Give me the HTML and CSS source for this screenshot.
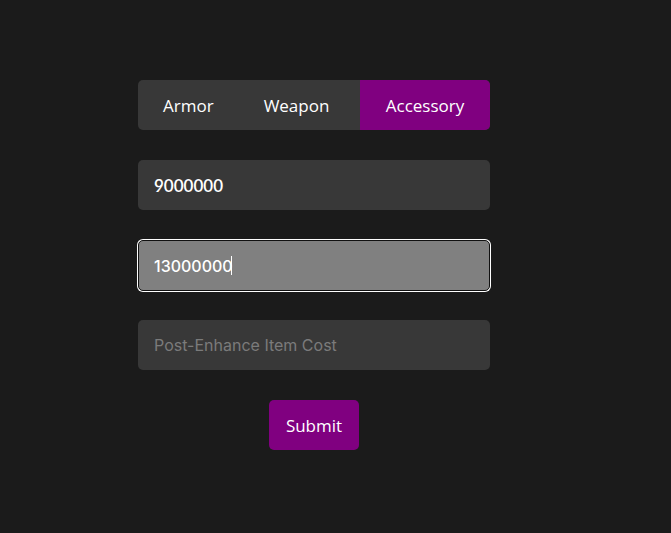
FILE: index.html
```html
<!DOCTYPE html>
<html lang="en">
<head>
<meta charset="utf-8">
<title>Enhance Calculator</title>
<link rel="stylesheet" href="styles.css">
</head>
<body>
<main class="panel">
  <div class="tabs">
    <button class="tab">Armor</button>
    <button class="tab">Weapon</button>
    <button class="tab tab-active">Accessory</button>
  </div>
  <input class="field" type="text" value="9000000">
  <div class="field-wrap">
    <input class="field field-focus" type="text" value="13000000">
    <span class="caret"></span>
  </div>
  <input class="field field-rubik" type="text" placeholder="Post-Enhance Item Cost">
  <button class="submit">Submit</button>
</main>
</body>
</html>
```
FILE: styles.css
```css
html, body {
  margin: 0;
  padding: 0;
  background: #1b1b1b;
  height: 100%;
}
body {
  font-family: "Open Sans", "Liberation Sans", sans-serif;
}
.panel {
  width: 352px;
  margin: 0 0 0 138px;
  padding-top: 80px;
  display: flex;
  flex-direction: column;
  align-items: stretch;
  gap: 30px;
}
.tabs {
  display: flex;
  height: 50px;
  background: #383838;
  border-radius: 5px;
  overflow: hidden;
}
.tab {
  border: none;
  background: transparent;
  color: #fff;
  font-family: "Open Sans", sans-serif;
  font-size: 17px;
  padding: 0 25px;
  height: 50px;
  cursor: pointer;
}
.tab-active {
  background: #800080;
  margin-left: auto;
  width: 130px;
}
.field {
  box-sizing: border-box;
  width: 352px;
  height: 50px;
  background: #383838;
  border: none;
  border-radius: 5px;
  padding: 0 16px;
  color: #fff;
  font-family: Lato, sans-serif;
  font-weight: 600;
  font-size: 17px;
  outline: none;
}
.field-rubik {
  font-family: Inter, sans-serif;
  font-weight: 400;
  font-size: 16px;
}
.field::placeholder {
  color: #7b7b7b;
}
.field-wrap {
  position: relative;
  height: 50px;
}
.field-focus {
  height: 51px;
  background: #808080;
  border: 1px solid #111;
  padding: 0 15px;
  box-shadow: 0 0 0 1px #fff;
  font-family: Inter, sans-serif;
  font-weight: 500;
  font-size: 16px;
}
.caret {
  position: absolute;
  left: 93px;
  top: 16px;
  width: 1px;
  height: 19px;
  background: #fff;
}
.submit {
  align-self: center;
  width: 90px;
  height: 50px;
  border: none;
  border-radius: 5px;
  background: #800080;
  color: #fff;
  font-family: "Open Sans", sans-serif;
  font-size: 17px;
  cursor: pointer;
}
```
